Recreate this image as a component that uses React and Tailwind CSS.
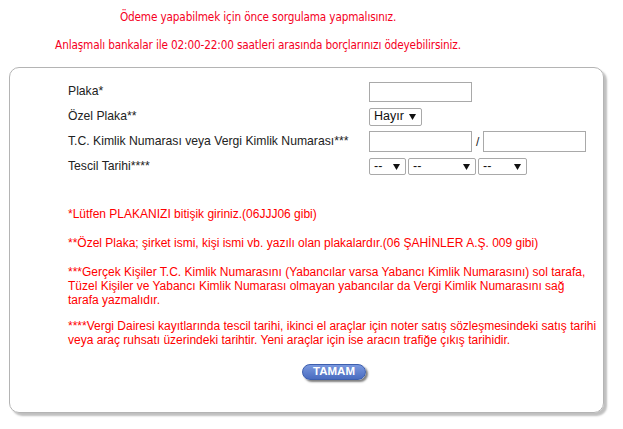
import React from "react";

const Arrow = () => (
  <svg width="7" height="6" viewBox="0 0 7 6" className="shrink-0">
    <path d="M0 0 L7 0 L3.5 6 Z" fill="#111" />
  </svg>
);

function FakeSelect({ label, w }) {
  return (
    <div
      className={`flex items-center justify-between h-full border border-[#a9a9a9] rounded-[2px] bg-white pl-[4px] pr-[5px] text-[12.5px] text-[#111] ${w}`}
    >
      <span className="leading-none">{label}</span>
      <Arrow />
    </div>
  );
}

function TextBox({ w }) {
  return <div className={`h-full border border-[#a9a9a9] bg-white ${w}`} />;
}

function Row({ label, children }) {
  return (
    <div className="flex items-center h-[25px]">
      <div className="w-[301px] text-[12.2px] text-[#222]">{label}</div>
      <div className="flex items-center gap-[2px]">{children}</div>
    </div>
  );
}

export default function App() {
  return (
    <div
      className="w-[623px] h-[429px] bg-white overflow-hidden"
      style={{ fontFamily: '"Liberation Sans", Arial, sans-serif' }}
    >
      <div
        className="w-[516px] pt-[9px] text-center text-[11.7px] tracking-[-0.15px] text-[#f5001e] leading-[16px]"
        style={{ fontFamily: '"DejaVu Sans Condensed", "DejaVu Sans", sans-serif' }}
      >
        <p>Ödeme yapabilmek için önce sorgulama yapmalısınız.</p>
        <p className="mt-[12px]">
          Anlaşmalı bankalar ile 02:00-22:00 saatleri arasında borçlarınızı ödeyebilirsiniz.
        </p>
      </div>

      <div className="ml-[9px] mt-[14px] w-[595px] h-[346px] border border-[#b4b4b4] rounded-[10px] shadow-[3px_3px_2px_rgba(0,0,0,0.25)] pl-[58px] pt-[11px]">
        <Row label="Plaka*">
          <div className="h-[20px] flex">
            <TextBox w="w-[103px]" />
          </div>
        </Row>
        <Row label="Özel Plaka**">
          <div className="h-[18px] flex">
            <FakeSelect label="Hayır" w="w-[53px]" />
          </div>
        </Row>
        <Row label="T.C. Kimlik Numarası veya Vergi Kimlik Numarası***">
          <div className="h-[21px] flex items-center">
            <TextBox w="w-[103px]" />
            <span className="mx-[4px] text-[12px] text-[#222]">/</span>
            <TextBox w="w-[103px]" />
          </div>
        </Row>
        <Row label="Tescil Tarihi****">
          <div className="h-[17px] flex gap-[2px]">
            <FakeSelect label="--" w="w-[37px]" />
            <FakeSelect label="--" w="w-[68px]" />
            <FakeSelect label="--" w="w-[49px]" />
          </div>
        </Row>

        <div className="mt-[28px] text-[12px] text-[#f00] leading-[14px] whitespace-nowrap">
          <p>*Lütfen PLAKANIZI bitişik giriniz.(06JJJ06 gibi)</p>
          <p className="mt-[15px]">
            **Özel Plaka; şirket ismi, kişi ismi vb. yazılı olan plakalardır.(06 ŞAHİNLER A.Ş. 009 gibi)
          </p>
          <p className="mt-[15px]">
            ***Gerçek Kişiler T.C. Kimlik Numarasını (Yabancılar varsa Yabancı Kimlik Numarasını) sol tarafa,
            <br />
            Tüzel Kişiler ve Yabancı Kimlik Numarası olmayan yabancılar da Vergi Kimlik Numarasını sağ
            <br />
            tarafa yazmalıdır.
          </p>
          <p className="mt-[12px]">
            ****Vergi Dairesi kayıtlarında tescil tarihi, ikinci el araçlar için noter satış sözleşmesindeki satış tarihi
            <br />
            veya araç ruhsatı üzerindeki tarihtir. Yeni araçlar için ise aracın trafiğe çıkış tarihidir.
          </p>
        </div>

        <div className="flex pl-[234px] mt-[17px]">
          <button className="w-[64px] h-[16px] rounded-full bg-gradient-to-b from-[#7a98de] to-[#4a6cc0] border border-[#3d5fae] text-white text-[11.5px] font-bold leading-none shadow-[2px_2px_2px_rgba(0,0,0,0.5)]">
            TAMAM
          </button>
        </div>
      </div>
    </div>
  );
}
